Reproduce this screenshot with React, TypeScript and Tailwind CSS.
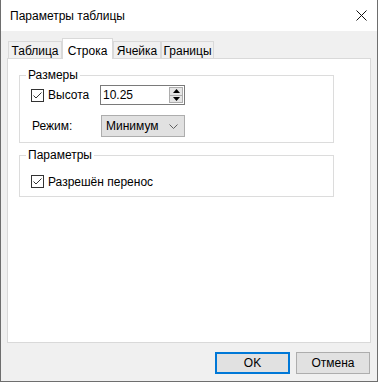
import React from "react";

function Check() {
  return (
    <span className="flex h-[13px] w-[13px] shrink-0 items-center justify-center border border-[#333333] bg-white">
      <svg width="11" height="11" viewBox="0 0 11 11">
        <path d="M1.5 5.5 L4 8 L9.5 2.5" fill="none" stroke="#333333" strokeWidth="1" />
      </svg>
    </span>
  );
}

function Group({ title, className, children }: { title: string; className?: string; children: React.ReactNode }) {
  return (
    <fieldset className={"w-[315px] border border-[#dcdcdc] px-[6px] " + (className ?? "")}>
      <legend className="px-[2px] text-[12px] leading-[16px]">{title}</legend>
      <div className="pl-[5px]">{children}</div>
    </fieldset>
  );
}

const tabs = [
  { label: "Таблица", w: "w-[54px]" },
  { label: "Строка", w: "w-[51px]", active: true },
  { label: "Ячейка", w: "w-[48px]" },
  { label: "Границы", w: "w-[53px]" },
];

export default function App() {
  return (
    <div className="flex h-[382px] w-[378px] flex-col border-x border-b border-[#6e6e6e] bg-[#f0f0f0] font-['Liberation_Sans',Arial,sans-serif] text-[12px] text-black">
      {/* title bar */}
      <div className="flex h-[31px] shrink-0 items-center justify-between bg-white pl-[9px] pr-[9px]">
        <span className="text-[12px]">Параметры таблицы</span>
        <svg width="11" height="11" viewBox="0 0 11 11" className="mr-[1px]">
          <path d="M0.5 0.5 L10.5 10.5 M10.5 0.5 L0.5 10.5" stroke="#111" strokeWidth="1" />
        </svg>
      </div>

      <div className="flex flex-1 flex-col px-[6px] pt-[7px]">
        {/* tabs */}
        <div className="ml-[1px] flex h-[20px] items-end">
          {tabs.map((t) =>
            t.active ? (
              <div
                key={t.label}
                className={"relative z-10 -mb-px flex h-[21px] items-start justify-center border border-b-0 border-[#d9d9d9] bg-white pt-[3px] " + t.w}
              >
                {t.label}
              </div>
            ) : (
              <div
                key={t.label}
                className={"flex h-[17px] items-center justify-center border border-b-0 border-[#d9d9d9] bg-[#f0f0f0] pt-px " + t.w}
              >
                {t.label}
              </div>
            )
          )}
        </div>

        {/* panel */}
        <div className="h-[285px] border border-[#d9d9d9] bg-white pl-[11px] pt-[8px]">
          <Group title="Размеры" className="pb-[5px]">
            <div className="mt-[2px] flex h-[20px] items-center">
              <div className="flex w-[69px] items-center gap-[4px]">
                <Check />
                <span>Высота</span>
              </div>
              <div className="flex h-[20px] w-[85px] border border-[#7a7a7a] bg-white">
                <div className="flex flex-1 items-center pl-[2px]">10.25</div>
                <div className="flex w-[16px] flex-col p-px">
                  <div className="flex flex-1 items-center justify-center border border-[#adadad] bg-[#e5e5e5]">
                    <svg width="7" height="4" viewBox="0 0 7 4"><path d="M0 4 L3.5 0 L7 4 Z" fill="#000" /></svg>
                  </div>
                  <div className="flex flex-1 items-center justify-center border border-t-0 border-[#adadad] bg-[#e5e5e5]">
                    <svg width="7" height="4" viewBox="0 0 7 4"><path d="M0 0 L3.5 4 L7 0 Z" fill="#000" /></svg>
                  </div>
                </div>
              </div>
            </div>
            <div className="mt-[10px] flex h-[22px] items-center">
              <div className="w-[70px] pl-[1px]">Режим:</div>
              <div className="flex h-[22px] w-[84px] items-center justify-between border border-[#adadad] bg-[#e1e1e1] pl-[4px] pr-[6px]">
                <span>Минимум</span>
                <svg width="9" height="5" viewBox="0 0 9 5">
                  <path d="M0.5 0.5 L4.5 4.5 L8.5 0.5" fill="none" stroke="#606060" strokeWidth="1" />
                </svg>
              </div>
            </div>
          </Group>

          <Group title="Параметры" className="mt-[4px] pb-[8px]">
            <div className="mt-[12px] flex h-[13px] items-center gap-[4px]">
              <Check />
              <span>Разрешён перенос</span>
            </div>
          </Group>
        </div>

        {/* buttons */}
        <div className="mt-[9px] flex justify-end gap-[6px] pr-[1px]">
          <button className="flex h-[22px] w-[75px] items-center justify-center border-2 border-[#0078d7] bg-[#e1e1e1]">
            OK
          </button>
          <button className="flex h-[22px] w-[74px] items-center justify-center border border-[#adadad] bg-[#e1e1e1]">
            Отмена
          </button>
        </div>
      </div>
    </div>
  );
}
